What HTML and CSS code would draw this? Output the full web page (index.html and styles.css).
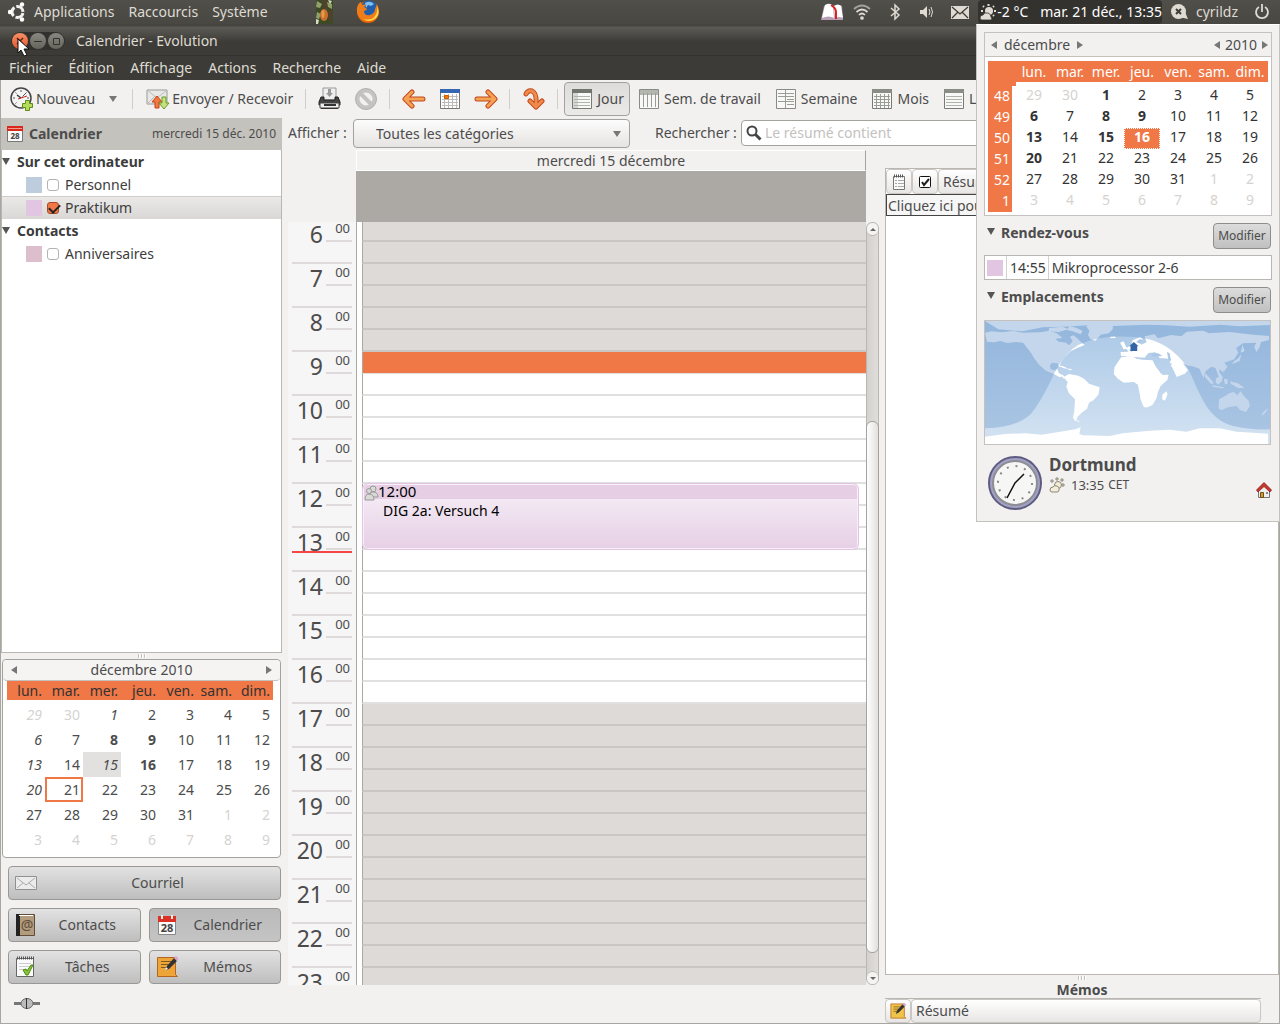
FILE: index.html
```html
<!DOCTYPE html>
<html lang="fr">
<head>
    <meta charset="UTF-8">
    <meta name="viewport" content="width=device-width, initial-scale=1.0">
    <title>Calendrier - Evolution</title>
    <link rel="stylesheet" href="styles.css">
</head>
<body>
    <!-- Tableau de bord GNOME -->
    <header class="panel">
        <nav class="panel-menu">
            <svg class="ubuntu" width="18" height="20" viewBox="0 0 18 20"><circle cx="9.500" cy="10" r="5.500" fill="none" stroke="#f2f1f0" stroke-width="3" stroke-dasharray="9.500 2" stroke-dashoffset="-1"/><g fill="#fff"><circle cx="2" cy="10" r="2.200"/><circle cx="14" cy="2.500" r="2.200"/><circle cx="14" cy="17.500" r="2.200"/></g></svg>
            <a href="#">Applications</a>
            <a href="#">Raccourcis</a>
            <a href="#">Système</a>
        </nav>
        <div class="launchers">
            <svg width="17" height="24" viewBox="0 0 17 24"><path fill="#3d4a26" d="M0 0h17v24H0z"/><path fill="#8fa06a" d="M1 1l5 3-2 4-4-1zM11 2l5 2v5l-4-2zM1 12l4 2-2 5-3-1z"/><path fill="#55402f" d="M7 0h3l1 10-3 2zM12 12l4-2v9l-3 3z"/><path fill="#d9dcc4" d="M12 0l4 1-2 3zM0 19l3 1-1 4H0z"/><ellipse cx="8" cy="15" rx="4" ry="6" fill="#c9702c"/><ellipse cx="7" cy="14" rx="1.500" ry="4" fill="#e79a4e"/></svg>
            <svg width="24" height="24" viewBox="0 0 24 24"><circle cx="12" cy="12" r="11" fill="#e66000"/><circle cx="13" cy="9" r="8.500" fill="#1f5fae"/><path fill="#7fc0ee" d="M9 3q5-3 9 1l-3 2-3-1-2 3z"/><path fill="#ee7d1a" d="M1 8q1-5 4-6l1 3q2-1 4 0L8 7q3 1 3 3-3 0-3 2 1 4 6 3 5-2 5-6l2-5q4 8-1 14-7 6-14 2Q0 15 1 8z"/><path fill="#ffd54a" d="M21 6q4 8-2 13-6 4-12 0 9 2 12-3 3-4 2-10z"/></svg>
        </div>
        <div class="tray">
            <svg width="24" height="20" viewBox="0 0 24 20"><path fill="#b89fb5" d="M1 18L4 4q8-3 10 0 5-2 8 0l1 14z"/><path fill="#fff" d="M2 16L5 3q5-3 8 1l1 12q-5-3-12 0zM14 4q4-3 7 0l2 12q-4-2-8 0z"/><path stroke="#d22" stroke-width="2" fill="none" d="M11 3q5 3 5 7v7"/></svg>
            <svg width="18" height="18" viewBox="0 0 18 18" fill="none" stroke="#dfdbd2" stroke-width="1.700"><path opacity=".6" d="M1 6q8-7 16 0"/><path d="M3.500 9q5.500-5 11 0M6 12q3-3 6 0"/><circle cx="9" cy="15" r="1" fill="#dfdbd2"/></svg>
            <svg width="12" height="18" viewBox="0 0 12 18" fill="none" stroke="#dfdbd2" stroke-width="1.500"><path d="M2 5l8 7-4 4V2l4 4-8 7"/></svg>
            <svg width="14" height="14" viewBox="0 0 14 14"><path fill="#dfdbd2" d="M1 5h3l4-4v12L4 9H1z"/><path fill="none" stroke="#dfdbd2" d="M10 4q2 3 0 6M12 2q3 5 0 10"/></svg>
            <svg width="18" height="13" viewBox="0 0 18 13"><path fill="#dfdbd2" d="M0 0h18v13H0z"/><path fill="none" stroke="#3c3b37" stroke-width="1.300" d="M1 1l8 7 8-7M1 12l6-6M17 12l-6-6"/></svg>
            <button class="clock-button">
                <svg width="18" height="18" viewBox="0 0 18 18" fill="#dfdbd2"><path stroke="#dfdbd2" stroke-width="2" d="M9.500 1v2M15 8h2M4 3l1 1M15 3l-1 1M2 8h2M15 13l-1-1"/><circle cx="10" cy="8" r="4"/><path stroke="#333" stroke-width=".8" d="M1 15q0-3 3-3 1-3 5-2 3 1 3 4 2 3-1 3H3q-2 0-2-2z"/></svg>
                <span>-2 °C</span><span>mar. 21 déc., 13:35</span>
            </button>
            <svg class="me" width="18" height="18" viewBox="0 0 18 18"><circle cx="8.500" cy="8.500" r="7.500" fill="#dfdbd2"/><path fill="#dfdbd2" d="M9 14l9 2-3-7z"/><path stroke="#3c3b37" stroke-width="2" d="M6 6l5 5M11 6l-5 5"/></svg>
            <span class="user">cyrildz</span>
            <svg width="16" height="16" viewBox="0 0 16 16" fill="none" stroke="#dfdbd2" stroke-width="1.800"><path d="M5 3a6 6 0 1 0 6 0M8 0v8"/></svg>
        </div>
    </header>

    <div class="window">
        <div class="titlebar">
            <div class="window-buttons">
                <button class="close" aria-label="Fermer"><svg width="16" height="16" viewBox="0 0 16 16" stroke="#5a2513" stroke-width="1.500"><path d="M5 5l6 6M11 5l-6 6"/></svg></button>
                <button aria-label="Réduire"><svg width="16" height="16" viewBox="0 0 16 16" stroke="#33322e"><path d="M4 8.500h8"/></svg></button>
                <button aria-label="Agrandir"><svg width="16" height="16" viewBox="0 0 16 16" fill="none" stroke="#33322e"><path d="M5.500 5.500h6v6h-6z"/></svg></button>
            </div>
            <span>Calendrier - Evolution</span>
        </div>
        <nav class="menubar">
            <a href="#">Fichier</a>
            <a href="#">Édition</a>
            <a href="#">Affichage</a>
            <a href="#">Actions</a>
            <a href="#">Recherche</a>
            <a href="#">Aide</a>
        </nav>

        <div class="toolbar">
            <button class="new">
                <svg width="24" height="24" viewBox="0 0 24 24"><circle cx="11" cy="11" r="10" fill="#f4f4f4" stroke="#444" stroke-width="1.500"/><path fill="none" stroke="#555" d="M11 3v2M3 11h2M17 11h2M5.500 5.500l1 1M5.500 16.500l1-1M16.500 5.500l-4 4"/><path stroke="#333" stroke-width="1.300" d="M11 11L7 8"/><path stroke="#c22" d="M8 12l9-3"/><path fill="#b4dc5a" stroke="#5c8c1c" d="M15.500 13.500h4v3h3v4h-3v3h-4v-3h-3v-4h3z"/></svg>
                Nouveau
            </button>
            <button class="drop" aria-label="Plus"><i class="tri-down"></i></button>
            <i class="sep"></i>
            <button class="send">
                <svg width="24" height="22" viewBox="0 0 24 22"><path fill="#e8e8e6" stroke="#999" d="M1 2h20v14H1z"/><path fill="none" stroke="#bbb" d="M1 16l8-8M1 2l10 8L21 2"/><path fill="#f0793f" stroke="#c8401a" d="M11 8l5 6h-3v6H9v-6H6z"/><path fill="#c5e27c" stroke="#6b9b2a" d="M18 21l-5-6h3V9h4v6h3z"/></svg>
                Envoyer / Recevoir
            </button>
            <i class="sep"></i>
            <button class="icon" aria-label="Imprimer"><svg width="24" height="24" viewBox="0 0 24 24"><path fill="#eee" stroke="#999" d="M5 1h13v12H5z"/><path fill="#999" d="M10 2h3v4h2l-3.500 4L8 6h2z"/><path fill="#444" stroke="#222" d="M3 10h3v3h11v-3h3l2 5v3H1v-3z"/><path fill="#eee" stroke="#444" d="M2 16h19v5H2z"/><path fill="#333" d="M6 17h12v2H6zM3 21h17v1H3z"/></svg></button>
            <button class="icon" aria-label="Arrêter" disabled><svg width="24" height="24" viewBox="0 0 24 24"><circle cx="12" cy="12" r="8.500" fill="none" stroke="#c6c3c1" stroke-width="4"/><path stroke="#c4c1bf" stroke-width="4" d="M6 6l12 12"/><circle cx="12" cy="12" r="10.500" fill="none" stroke="#b2afad"/></svg></button>
            <i class="sep"></i>
            <button class="icon" aria-label="Précédent"><svg width="24" height="20" viewBox="0 0 24 20"><path fill="none" stroke="#c4481c" stroke-width="5" stroke-linecap="round" stroke-linejoin="round" d="M21 10H4M10 3l-7 7 7 7"/><path fill="none" stroke="#f4a254" stroke-width="3" stroke-linecap="round" stroke-linejoin="round" d="M21 10H4M10 3l-7 7 7 7"/></svg></button>
            <button class="icon" aria-label="Aujourd'hui"><svg width="20" height="20" viewBox="0 0 20 20"><path fill="#fff" stroke="#777" d="M.5.500h19v19H.5z"/><path fill="#3467b0" d="M0 0h20v4H0z"/><path stroke="#bbb" d="M2 7.500h16M2 10.500h16M2 13.500h16M2 16.500h16M4.500 5v14M8.500 5v14M12.500 5v14M16.500 5v14"/><path fill="#f57900" stroke="#ce5c00" d="M4.500 6.500h4v3h-4z"/></svg></button>
            <button class="icon" aria-label="Suivant"><svg width="24" height="20" viewBox="0 0 24 20"><path fill="none" stroke="#c4481c" stroke-width="5" stroke-linecap="round" stroke-linejoin="round" d="M3 10h17M14 3l7 7-7 7"/><path fill="none" stroke="#f4a254" stroke-width="3" stroke-linecap="round" stroke-linejoin="round" d="M3 10h17M14 3l7 7-7 7"/></svg></button>
            <i class="sep"></i>
            <button class="icon" aria-label="Aller à"><svg width="22" height="22" viewBox="0 0 22 22" fill="none" stroke-linecap="round" stroke-linejoin="round"><path stroke="#c4481c" stroke-width="5" d="M3 6Q5 2 9 3q5 2 4 14M7 13l6 6 6-6"/><path stroke="#ee8a4a" stroke-width="3" d="M3 6Q5 2 9 3q5 2 4 14M7 13l6 6 6-6"/></svg></button>
            <i class="sep"></i>
            <button class="view active">
                <svg width="20" height="20" viewBox="0 0 20 20"><path fill="#f8f8f6" stroke="#777b74" d="M.5.500h19v19H.5z"/><path fill="#71756e" d="M0 0h20v4H0z"/><path fill="#d5d7d2" d="M1 4h5v15H1z"/><path stroke="#b0b3ac" d="M2 7.500h16M2 10.500h16M2 13.500h16M2 16.500h16"/></svg>
                Jour
            </button>
            <button class="view">
                <svg width="20" height="20" viewBox="0 0 20 20"><path fill="#f8f8f6" stroke="#888c85" d="M.5.500h19v19H.5z"/><path fill="#b4b7b0" d="M1 1h18v5H1z"/><path stroke="#9a9d96" d="M4.500 4v14M8.500 4v14M12.500 4v14M16.500 4v14"/></svg>
                Sem. de travail
            </button>
            <button class="view">
                <svg width="20" height="20" viewBox="0 0 20 20"><path fill="#f8f8f6" stroke="#888c85" d="M.5.500h19v19H.5z"/><path stroke="#9a9d96" d="M9.500 1v18M2 4.500h16M2 7.500h16M2 12.500h16M11 10.500h7M11 15.500h7"/></svg>
                Semaine
            </button>
            <button class="view">
                <svg width="20" height="20" viewBox="0 0 20 20"><path fill="#f8f8f6" stroke="#777b74" d="M.5.500h19v19H.5z"/><path fill="#8a8d86" d="M0 0h20v4H0z"/><path stroke="#9a9d96" d="M2 7.500h16M2 10.500h16M2 13.500h16M2 16.500h16M4.500 5v14M8.500 5v14M12.500 5v14M16.500 5v14"/></svg>
                Mois
            </button>
            <button class="view">
                <svg width="20" height="20" viewBox="0 0 20 20"><path fill="#f8f8f6" stroke="#777b74" d="M.5.500h19v19H.5z"/><path fill="#8a8d86" d="M0 0h20v4H0z"/><path stroke="#b0b3ac" d="M2 7.500h16M2 10.500h16M2 13.500h16M2 16.500h16"/></svg>
                Liste
            </button>
        </div>

        <div class="workspace">
            <aside class="sidebar">
                <div class="sidebar-head">
                    <svg width="16" height="16" viewBox="0 0 16 16"><path fill="#fafafa" stroke="#777" d="M.5.500h15v15H.5z"/><path fill="#d8281c" d="M0 0h16v5H0z"/><path fill="#f59a90" d="M1 2h14v1H1z"/><text x="8" y="13" font-size="8" font-weight="bold" text-anchor="middle" fill="#444">28</text></svg>
                    <b>Calendrier</b>
                    <span>mercredi 15 déc. 2010</span>
                </div>
                <div class="tree">
                    <div class="group"><i class="tri-dark"></i>Sur cet ordinateur</div>
                    <label class="source"><i class="swatch blue"></i><input type="checkbox">Personnel</label>
                    <label class="source selected"><i class="swatch pink"></i><input type="checkbox" checked>Praktikum</label>
                    <div class="group"><i class="tri-dark"></i>Contacts</div>
                    <label class="source"><i class="swatch rose"></i><input type="checkbox">Anniversaires</label>
                </div>
                <div class="grip"></div>
                <div class="mini-cal">
                    <div class="mini-head">
                        <button aria-label="Mois précédent"><i class="tri-left"></i></button>
                        <span>décembre 2010</span>
                        <button aria-label="Mois suivant"><i class="tri-right"></i></button>
                    </div>
                    <table>
                        <thead>
                            <tr><th>lun.</th><th>mar.</th><th>mer.</th><th>jeu.</th><th>ven.</th><th>sam.</th><th>dim.</th></tr>
                        </thead>
                        <tbody>
                            <tr><td class="out it">29</td><td class="out">30</td><td class="it">1</td><td>2</td><td>3</td><td>4</td><td>5</td></tr>
                            <tr><td class="it">6</td><td>7</td><td class="busy">8</td><td class="busy">9</td><td>10</td><td>11</td><td>12</td></tr>
                            <tr><td class="it">13</td><td>14</td><td class="it picked">15</td><td class="busy">16</td><td>17</td><td>18</td><td>19</td></tr>
                            <tr><td class="it">20</td><td class="today">21</td><td>22</td><td>23</td><td>24</td><td>25</td><td>26</td></tr>
                            <tr><td>27</td><td>28</td><td>29</td><td>30</td><td>31</td><td class="out">1</td><td class="out">2</td></tr>
                            <tr><td class="out">3</td><td class="out">4</td><td class="out">5</td><td class="out">6</td><td class="out">7</td><td class="out">8</td><td class="out">9</td></tr>
                        </tbody>
                    </table>
                </div>
                <div class="switcher">
                    <button class="wide">
                        <svg width="22" height="22" viewBox="0 0 22 22"><path fill="#ececec" stroke="#909090" d="M.5 4.500h21v13H.5z"/><path fill="none" stroke="#aaa" d="M2 6l9 7 9-7M2 16l6-5M20 16l-6-5"/></svg>
                        <span>Courriel</span>
                    </button>
                    <button>
                        <svg width="22" height="24" viewBox="0 0 22 24"><path fill="#b39b7d" stroke="#5e4d38" d="M2.500 1.500h17v21h-17z"/><path fill="#222" d="M1 1h4v22H1z"/><path fill="#fff" d="M4 2h14v1H4z"/><text x="12" y="17" font-size="14" text-anchor="middle" fill="#5e4d38">@</text></svg>
                        <span>Contacts</span>
                    </button>
                    <button class="active">
                        <svg width="22" height="22" viewBox="0 0 22 22"><path fill="#fafafa" stroke="#888" d="M2.500 2.500h17v18h-17z"/><path fill="#dc3024" d="M2 2h18v6H2z"/><path fill="#eee" d="M5 1h2v4H5zM15 1h2v4h-2z"/><text x="11" y="18" font-size="11" font-weight="bold" text-anchor="middle" fill="#444">28</text></svg>
                        <span>Calendrier</span>
                    </button>
                    <button>
                        <svg width="22" height="24" viewBox="0 0 22 24"><path fill="#fbfbfb" stroke="#666" d="M1.500 3.500h17v18h-17z"/><path stroke="#555" stroke-width="3" stroke-dasharray="1 1" d="M2 3h17"/><path fill="none" stroke="#ccc" d="M4 8.500h12M4 11.500h12M4 14.500h6"/><path fill="#8ac43a" stroke="#4e8a10" d="M8 15l3-1 1 2 4-6h2l-5 10h-2z"/></svg>
                        <span>Tâches</span>
                    </button>
                    <button>
                        <svg width="22" height="24" viewBox="0 0 22 24"><path fill="#eda53a" stroke="#b5651d" d="M1.500 2.500h18v17l2 2h-20z"/><path stroke="#7d5a1e" d="M5 6.500h10M5 9.500h8M5 12.500h6"/><path fill="#333" d="M9 15l2-4 7-8 3 3-8 8z"/><path fill="#fff" d="M9 15l1-3 2 2z"/><path fill="#d9a5d0" d="M18 3l2-2 3 3-2 2z"/></svg>
                        <span>Mémos</span>
                    </button>
                </div>
                <div class="status">
                    <svg width="28" height="14" viewBox="0 0 28 14"><path stroke="#777" stroke-width="3" d="M1 6.500h7M20 6.500h7"/><ellipse cx="14" cy="6.500" rx="6" ry="5" fill="#bbb" stroke="#666"/><path stroke="#333" d="M13.500 1v11"/></svg>
                </div>
            </aside>

            <i class="vgrip"></i>

            <main class="content">
                <div class="filters">
                    <label for="category">Afficher :</label>
                    <div class="combo">
                        <select id="category"><option>Toutes les catégories</option></select>
                        <i class="tri-down"></i>
                    </div>
                    <label class="find" for="search">Rechercher :</label>
                    <div class="search">
                        <svg width="16" height="16" viewBox="0 0 16 16" fill="none" stroke="#444"><circle cx="6" cy="6" r="4.500" stroke-width="2"/><path stroke-width="3" d="M9.500 9.500l5 5"/></svg>
                        <input type="text" id="search" placeholder="Le résumé contient">
                    </div>
                </div>

                <div class="panes">
                    <section class="day-view">
                        <div class="day-head">mercredi 15 décembre</div>
                        <div class="all-day"></div>
                        <div class="day-scroll">
                            <div class="hours" id="hours"></div>
                            <div class="slots" id="slots">
                                <div class="event">
                                    <div class="event-time">12:00</div>
                                    <div class="event-name">DIG 2a: Versuch 4</div>
                                    <svg width="16" height="16" viewBox="0 0 16 16" fill="#d9d9d6" stroke="#999"><circle cx="9" cy="4" r="3"/><path d="M5 12q0-5 4-5 5 0 5 5z"/><circle cx="5" cy="6" r="2.500"/><path d="M1 15q0-6 4-6 5 0 5 6z"/></svg>
                                </div>
                            </div>
                        </div>
                        <div class="scrollbar">
                            <i class="step"><b class="tri-up"></b></i>
                            <i class="thumb"></i>
                            <i class="step end"><b class="tri-small"></b></i>
                        </div>
                    </section>

                    <section class="tasks">
                        <div class="task-list">
                            <div class="cols">
                                <button aria-label="Type"><svg width="14" height="16" viewBox="0 0 14 16"><path fill="#fafafa" stroke="#777" d="M1.500 2.500h11v13h-11z"/><path stroke="#555" stroke-width="3" stroke-dasharray="1 1" d="M2 2h10"/><path stroke="#aaa" stroke-dasharray="2 1 6" d="M3 6.500h9M3 9.500h9M3 12.500h9"/></svg></button>
                                <button aria-label="Terminé"><svg width="14" height="14" viewBox="0 0 14 14"><rect x="1.500" y="1.500" width="11" height="11" rx="1" fill="#fff" stroke="#111"/><path fill="none" stroke="#222" stroke-width="2" d="M4 7l2 3 5-6"/></svg></button>
                                <button class="grow">Résumé</button>
                            </div>
                            <input type="text" class="quick-add" aria-label="Nouvelle tâche" value="Cliquez ici pour ajouter une tâche">
                        </div>
                        <div class="grip"></div>
                        <h2>Mémos</h2>
                        <div class="memo-cols cols">
                            <button aria-label="Type"><svg width="18" height="18" viewBox="0 0 22 24"><path fill="#f0c34a" stroke="#b5651d" d="M1.500 2.500h18v17l2 2h-20z"/><path stroke="#7d5a1e" d="M5 6.500h10M5 9.500h8M5 12.500h6"/><path fill="#333" d="M8 16l2-5 7-8 3 3-8 8z"/><path fill="#d9a5d0" d="M17 3l2-2 3 3-2 2z"/></svg></button>
                            <button class="grow">Résumé</button>
                        </div>
                    </section>
                </div>
            </main>
        </div>
    </div>

    <!-- Pointeur de souris -->
    <svg class="cursor" width="14" height="20" viewBox="0 0 14 20"><path fill="#fff" stroke="#111" d="M1 1v14l3-3 3 6 3-1-3-6h5z"/></svg>

    <!-- Calendrier de l'horloge -->
    <div class="popup">
        <div class="cal">
            <div class="cal-head">
                <i class="tri-left"></i><span>décembre</span><i class="tri-right"></i>
                <i class="tri-left year"></i><span>2010</span><i class="tri-right"></i>
            </div>
            <table>
                <thead>
                    <tr><th class="week"></th><th>lun.</th><th>mar.</th><th>mer.</th><th>jeu.</th><th>ven.</th><th>sam.</th><th>dim.</th></tr>
                </thead>
                <tbody>
                    <tr><td class="week">48</td><td class="out">29</td><td class="out">30</td><td class="busy">1</td><td>2</td><td>3</td><td>4</td><td>5</td></tr>
                    <tr><td class="week">49</td><td class="busy">6</td><td>7</td><td class="busy">8</td><td class="busy">9</td><td>10</td><td>11</td><td>12</td></tr>
                    <tr><td class="week">50</td><td class="busy">13</td><td>14</td><td class="busy">15</td><td class="busy picked">16</td><td>17</td><td>18</td><td>19</td></tr>
                    <tr><td class="week">51</td><td class="busy">20</td><td>21</td><td>22</td><td>23</td><td>24</td><td>25</td><td>26</td></tr>
                    <tr><td class="week">52</td><td>27</td><td>28</td><td>29</td><td>30</td><td>31</td><td class="out">1</td><td class="out">2</td></tr>
                    <tr><td class="week">1</td><td class="out">3</td><td class="out">4</td><td class="out">5</td><td class="out">6</td><td class="out">7</td><td class="out">8</td><td class="out">9</td></tr>
                </tbody>
            </table>
        </div>

        <div class="section-head"><i class="tri-dark"></i><b>Rendez-vous</b><button>Modifier</button></div>
        <div class="appointment"><i class="swatch pink"></i><span class="time">14:55</span><span>Mikroprocessor 2-6</span></div>
        <div class="section-head"><i class="tri-dark"></i><b>Emplacements</b><button>Modifier</button></div>

        <svg class="map" viewBox="48 63 852 369" preserveAspectRatio="none">
            <defs>
                <linearGradient id="sea" x1="0" y1="0" x2="0" y2="1"><stop offset="0" stop-color="#a9c7e6"/><stop offset="1" stop-color="#d4e3f2"/></linearGradient>
            </defs>
            <path fill="url(#sea)" d="M48 63h852v369H48z"/>
            <g fill="#fff">
                <path d="M48 63h852v12l-90 4-60-5-90 6-70-4-60-2-100 4-60-3-90 5-60 2-60 12-72-6z"/>
                <path d="M48 98l20-4 30 3 34-4 30 5 50-1 30-5 20 8 18 14-22 2 10 9 22 3 10 8 10-12-8-14 10-4 12 9 10 10 12 10-22 9-20 10-18 18-10 14-4 10 0 6-8-12-16-2-6 8 2 12 12 3 8-5 4 12 12 10-8 4-18-10-24-10-20-18-16-20-6-12-12-16-14-18-22-2-26 3-20-6-20 4-20-2z"/>
                <path d="M300 78l20 5 20 10-6 10-20-8-20-5zM350 78l30-8 50 0 0 18-12 12-24 4-16 18-14-4-8-12 4-14zM240 84l40-4 18 8-30 8-30-2zM420 110l16-1 4 4-14 2zM262 196l20 3 16 8-14-2zM290 205l20 3-8 3z"/>
                <path d="M270 222l10 2 8 8-4 4zM283 232l16-10 28 5 18 10 14 14 32 11-4 22-14 16-14 8-6 18-16 12-12 12-4 12 8 0 2 4-14-4-6-8 4-22 2-34-18-18-8-20 4-14z"/>
                <path d="M455 172l32-4 14 8 18 3 30 2 12 22 18 22 18-1-4 16-20 18-8 18-4 18-12 20-14 8-12 0-10-24-4-24-4-20-12-8-30 2-18-12-12-14 2-20z"/>
                <path d="M578 284l12-10 4 8-8 20-8-4zM452 128l10-4 8 16 4 6-12 2zM786 192l8-10 10-6 10-14-4 20-16 8zM812 158l6-24 6 20z"/>
                <path d="M455 168l-2-12 24-1-8-10 16-10 4-14 24-10 8 10-8 14 18-8-6-18 30-6 10 12 40-10 30 4 16-14 50-3 16 8 62-4 70 8 48 4v12l-24 6-4 16-10 14-6-16 6-12-40 2-20 14 6 14-12 20-30 10 10 12-10 14-10-6-6 6 12 18-4 12-10-18-8-22-12-4-18 14-6 20-12-28-20-7-14-2-16-8 16 22-10 10-24 10-12-26-10-16 6-12-24-2-10 0-14-18-20 2-12 14z"/>
                <path d="M704 218l14 14 14 18-8 2-18-20zM738 236l14-10 4 18-10 10-8-6zM762 238l10-2 2 14-8 4zM748 198l8-4 6 24-8-6zM728 256l36 6-6 3-30-5zM780 244l24 6 20 14-20 0-20-12zM748 298l14-8 16-10 14-4 10 10 10-12 8 12 16 16 4 16-12 18-18-6-10-12-26 4-18 8-10-4z"/>
                <path d="M874 344l10-12 10-8-6 12-10 10zM48 410l60-8 60-2 50 4 50-8 50-8 16-6-4 20 10 4 80 2 40-8 80-8 60-3 50 6 40-10 60 0 50 10 60 4 34 2v33H48z"/>
            </g>
            <path fill="#a9c7e6" d="M546 166q8-12 24-4l8 6-28 2zM592 156l8 4 4 22-8-4zM478 150l8-2 2 8zM500 126l10-8 12 2-8 12z"/>
            <path fill="none" stroke="#bcd2ea" stroke-width="4" d="M554 188l22 32M592 184l14 10"/>
            <path fill="#76a1d0" fill-opacity=".43" d="M48 63h852v325q-60 2-110-10-50-12-84-66-20-34-40-84-20-46-62-78-50-40-130-40-84-4-146 24-40 22-72 84-30 66-60 110-36 54-148 57z"/>
            <path fill="#3465a4" d="M493 126l14 13h-4v14h-20v-14h-4z"/>
        </svg>

        <div class="location">
            <svg width="56" height="56" viewBox="0 0 56 56"><circle cx="28" cy="28" r="26" fill="#a3a2c4" stroke="#5e5b80" stroke-width="2"/><circle cx="28" cy="28" r="22" fill="#f6f6f4" stroke="#8d8d95" stroke-width="2"/><circle cx="28" cy="28" r="17" fill="none" stroke="#888" stroke-width="2" stroke-dasharray="2 6.900"/><path fill="none" stroke="#111" stroke-width="1.500" d="M20 43l8-15 9-9"/></svg>
            <div class="place">
                <b>Dortmund</b>
                <span><svg width="16" height="16" viewBox="0 0 16 16" fill="#f3ecd8" stroke="#8b8776"><path d="M7 1h2v2H7zM2 3h2v2H2zM12 2h2v2h-2zM13 7h2v2h-2z"/><circle cx="9" cy="8" r="3.500"/><path d="M1 13q0-3 3-3 1-2 4-1 3 1 2 4 0 2-2 2H3q-2 0-2-2z"/></svg>13:35 <small>CET</small></span>
            </div>
            <svg class="home" width="16" height="16" viewBox="0 0 16 16"><path fill="#eee" stroke="#777" d="M2.500 8v7.500h11V8L8 3z"/><path fill="#c4372f" stroke="#8f1f1a" stroke-width=".8" d="M8 .5L.5 8l1.500 2L8 4.500 14 10l1.500-2z"/><path fill="#d59a2c" stroke="#70501a" d="M4.500 10.500h3v5h-3z"/><path fill="#888" d="M10 10h2v2h-2z"/></svg>
        </div>
    </div>

    <script>
        // Construit la colonne des heures et les demi-heures de la journée
        const hours = document.getElementById('hours');
        const slots = document.getElementById('slots');

        for (let h = 6; h < 24; h++) {
            const row = document.createElement('div');
            row.className = 'hour';
            row.innerHTML = '<span>' + h + '</span><small>00</small>';
            if (h === 13) {
                row.innerHTML += '<i class="now"></i>';
            }
            hours.appendChild(row);

            for (let half = 0; half < 2; half++) {
                const slot = document.createElement('div');
                slot.className = 'slot';
                if (h >= 9 && h < 17) {
                    slot.classList.add('work');
                }
                if (h === 9 && half === 0) {
                    slot.classList.add('current');
                }
                slots.appendChild(slot);
            }
        }
    </script>
</body>
</html>
```
FILE: styles.css
```css
* {
    box-sizing: border-box;
}
body {
    margin: 0;
    height: 100vh;
    display: flex;
    flex-direction: column;
    overflow: hidden;
    background: #f2f1f0;
    color: #4c4c4c;
    font-family: "Noto Sans", "Open Sans", sans-serif;
    font-size: 14px;
    line-height: 20px;
}
button,
input,
select {
    font: inherit;
    color: inherit;
    margin: 0;
    padding: 0;
}
button {
    border: none;
    background: none;
    white-space: nowrap;
}
a {
    color: inherit;
    text-decoration: none;
}
svg {
    display: block;
    flex: none;
}
i {
    flex: none;
    font-style: normal;
}
table {
    border-spacing: 0;
    table-layout: fixed;
}
th,
td {
    padding: 0;
    font-weight: normal;
}

/* flèches */
.tri-down,
.tri-dark,
.tri-up,
.tri-small,
.tri-left,
.tri-right {
    display: block;
    border: 4px solid transparent;
}
.tri-down {
    border-top: 6px solid #777;
    border-bottom: none;
}
.tri-dark {
    border-top: 7px solid #555;
    border-bottom: none;
}
.tri-up {
    border-width: 3px;
    border-bottom: 3px solid #666;
    border-top: none;
}
.tri-small {
    border-width: 3px;
    border-top: 3px solid #666;
    border-bottom: none;
}
.tri-left {
    border-right: 6px solid #777;
    border-left: none;
}
.tri-right {
    border-left: 6px solid #777;
    border-right: none;
}

/* tableau de bord */
.panel {
    height: 24px;
    flex: none;
    display: flex;
    align-items: center;
    justify-content: space-between;
    padding: 0 10px 0 8px;
    background: linear-gradient(#504f4a, #484742);
    color: #dfdbd2;
}
.panel-menu {
    display: flex;
    align-items: center;
    gap: 14px;
}
.ubuntu {
    margin-right: -6px;
}
.launchers {
    display: flex;
    gap: 23px;
    flex: 1;
    padding-left: 48px;
}
.tray {
    display: flex;
    align-items: center;
    gap: 18px;
}
.tray > svg:first-child {
    margin-right: -9px;
}
.clock-button {
    height: 24px;
    display: flex;
    align-items: center;
    gap: 12px;
    margin: 0 -10px 0 -9px;
    border-radius: 4px;
    background: #33322e;
    color: #fff;
}
.clock-button svg {
    margin: 0 -12px 0 1px;
}
.user {
    margin: 0 -2px 0 -10px;
}

/* fenêtre */
.window {
    flex: 1;
    min-height: 0;
    display: flex;
    flex-direction: column;
    border: 1px solid #a8a6a1;
    border-top: none;
}
.titlebar {
    height: 31px;
    flex: none;
    display: flex;
    align-items: center;
    gap: 11px;
    margin: 0 -1px;
    padding: 2px 11px 0;
    background: linear-gradient(#45443f 2px, #5c5b55 3px, #3c3b37 18px);
    color: #dfdbd2;
}
.window-buttons {
    display: flex;
    gap: 2px;
    padding: 1px;
    border-radius: 9px;
    background: #32312d;
}
.window-buttons button {
    width: 16px;
    height: 16px;
    border-radius: 8px;
    background: linear-gradient(#8a8880, #65645d);
}
.window-buttons .close {
    background: linear-gradient(#f79067, #e2582e);
}
.menubar {
    height: 25px;
    flex: none;
    display: flex;
    align-items: center;
    gap: 16px;
    margin: 0 -1px;
    padding-left: 9px;
    border-top: 1px solid #33322e;
    background: #3c3b37;
    color: #dfdbd2;
}
.toolbar {
    height: 38px;
    flex: none;
    display: flex;
    align-items: center;
    padding-left: 9px;
    overflow: hidden;
}
.toolbar button {
    display: flex;
    align-items: center;
    gap: 2px;
}
.toolbar .drop {
    padding: 0 14px;
}
.toolbar .icon {
    width: 36px;
    justify-content: center;
}
.toolbar .view {
    height: 34px;
    gap: 5px;
    padding: 0 5px 0 8px;
    border: 1px solid transparent;
    border-radius: 4px;
}
.toolbar .view.active {
    padding-left: 7px;
    border-color: #a5a29d;
    background: linear-gradient(#dedcda, #eceae8);
}
.sep {
    width: 1px;
    height: 20px;
    margin: 0 6px 0 5px;
    background: #d0cdca;
}
.drop + .sep {
    margin-right: 13px;
    margin-left: 1px;
}
.send + .sep {
    margin-left: 12px;
}

/* colonne de gauche */
.workspace {
    flex: 1;
    min-height: 0;
    display: flex;
}
.sidebar {
    width: 281px;
    flex: none;
    display: flex;
    flex-direction: column;
}
.sidebar-head {
    height: 32px;
    display: flex;
    align-items: center;
    gap: 6px;
    padding: 0 6px;
    background: #c4c2bc;
}
.sidebar-head span {
    margin-left: auto;
    font-size: 12px;
}
.tree {
    flex: 1;
    border: 1px solid #bab7b3;
    border-width: 0 1px 1px;
    background: #fff;
    color: #3c3c3c;
}
.group {
    height: 23px;
    display: flex;
    align-items: center;
    gap: 7px;
    font-weight: bold;
}
.source {
    height: 23px;
    display: flex;
    align-items: center;
    gap: 5px;
    padding-left: 24px;
}
.source.selected {
    border-top: 1px solid #cfcdca;
    background: linear-gradient(#eae9e8, #dad8d6);
}
.source input {
    appearance: none;
    width: 12px;
    height: 12px;
    margin-right: 1px;
    border: 1px solid #b5b3b0;
    border-radius: 3px;
    background: #fff;
}
.source input:checked {
    border-color: #a8492a;
    background: #f07746;
}
.source input:checked::after {
    content: "";
    display: block;
    width: 9px;
    height: 5px;
    margin: 1px;
    border: solid #222;
    border-width: 0 0 2px 2px;
    transform: rotate(-45deg);
}
.swatch {
    width: 16px;
    height: 16px;
}
.blue {
    background: #becddd;
}
.pink {
    background: #e2c5e1;
}
.rose {
    background: #ddbecd;
}
.grip {
    width: 8px;
    height: 4px;
    margin: 1px auto;
    background: repeating-linear-gradient(90deg, #c4c1be 0 1px, #fff 1px 2px, transparent 2px 3px);
}
.mini-cal {
    height: 199px;
    margin: 0 1px 8px;
    border: 1px solid #a5a29d;
    border-radius: 4px;
    background: #fff;
}
.mini-head {
    height: 21px;
    display: flex;
    align-items: center;
    justify-content: space-between;
    padding: 0 8px;
    border-bottom: 1px solid #c4c1be;
    border-radius: 4px;
    background: #f5f4f3;
}
.mini-cal table {
    width: 266px;
    margin-left: 4px;
    text-align: right;
}
.mini-cal th {
    height: 21px;
    line-height: 19px;
    padding-right: 3px;
    border-bottom: 2px solid #fff;
    background: #f07746;
    background-clip: padding-box;
    color: #333;
}
.mini-cal td {
    height: 25px;
    padding-right: 3px;
}
td.out {
    color: #d5d3d1;
}
.it {
    font-style: italic;
}
.busy {
    font-weight: bold;
}
.mini-cal .picked {
    background: #e2e1df;
}
.mini-cal .today {
    box-shadow: inset 0 0 0 2px #f07746;
}
.switcher {
    display: grid;
    grid-template-columns: 1fr 1fr;
    gap: 8px;
    padding: 0 1px 0 7px;
}
.switcher button {
    height: 34px;
    display: flex;
    align-items: center;
    padding: 0 6px;
    border: 1px solid #9a9895;
    border-radius: 4px;
    background: linear-gradient(#e2e2e2, #bebebe);
}
.switcher span {
    flex: 1;
    padding-left: 4px;
}
.switcher .wide {
    grid-column: 1 / 3;
}
.switcher .active {
    background: linear-gradient(#bababa, #c4c4c4);
}
.status {
    height: 39px;
    flex: none;
    padding: 13px 12px;
}
.vgrip {
    width: 6px;
}

/* barre de filtre */
.content {
    flex: 1;
    min-width: 0;
    display: flex;
    flex-direction: column;
}
.filters {
    height: 32px;
    flex: none;
    display: flex;
    align-items: flex-start;
    padding-top: 1px;
    line-height: 28px;
    white-space: nowrap;
}
.filters label {
    width: 65px;
    flex: none;
}
.filters .find {
    width: 86px;
    margin-left: 25px;
}
.combo {
    width: 277px;
    flex: none;
    display: flex;
    align-items: center;
    padding-right: 8px;
    border: 1px solid #a5a29d;
    border-radius: 4px;
    background: linear-gradient(#fcfcfc, #e6e4e2);
}
.combo select {
    appearance: none;
    flex: 1;
    height: 27px;
    padding-left: 22px;
    border: none;
    background: none;
}
.search {
    flex: 1;
    height: 26px;
    display: flex;
    align-items: center;
    gap: 3px;
    margin-top: 1px;
    padding-left: 4px;
    border: 1px solid #a5a29d;
    border-radius: 4px;
    background: #fff;
}
.search input {
    flex: 1;
    min-width: 0;
    border: none;
    background: none;
}
.search input::placeholder {
    color: #c4c1be;
}
.panes {
    flex: 1;
    min-height: 0;
    display: flex;
    gap: 6px;
}

/* vue de la journée */
.day-view {
    flex: 1;
    min-width: 0;
    display: grid;
    grid-template-columns: 68px 1fr 13px;
    grid-template-rows: 21px 51px 1fr;
    margin-bottom: 38px;
}
.day-head {
    grid-column: 2;
    border: 1px solid #fff;
    border-right-color: #a5a29d;
    text-align: center;
}
.all-day {
    grid-column: 2;
    background: #aca9a4;
}
.day-scroll {
    grid-row: 3;
    grid-column: 1 / 3;
    display: flex;
    min-height: 0;
    overflow: hidden;
}
.hours {
    width: 68px;
    margin-top: -2px;
    padding: 0 4px;
    background: #f6f6f6;
}
.hour {
    position: relative;
    height: 44px;
    display: flex;
    justify-content: flex-end;
    border-bottom: 2px solid #dfdada;
}
.hour span {
    padding-right: 3px;
    font-size: 23px;
    line-height: 28px;
}
.hour small {
    width: 26px;
    height: 22px;
    padding-right: 2px;
    border-bottom: 2px solid #dfdada;
    font-size: 13px;
    line-height: 17px;
    text-align: right;
}
.now {
    position: absolute;
    top: 54%;
    left: 0;
    right: 0;
    height: 2px;
    background: #f54545;
}
.slots {
    position: relative;
    flex: 1;
    height: 792px;
    margin-top: -2px;
    border-left: 1px solid #aca9a4;
    padding-left: 5px;
    background: #fff;
}
.slot {
    height: 22px;
    border-left: 1px solid #aca9a4;
    border-bottom: 2px solid #c9c6c3;
    background: #dddad7;
}
.slot.work {
    border-bottom-color: #e0e0e0;
    background: #fff;
}
.slot.current {
    border-bottom-width: 1px;
    background: #f07746;
}
.event {
    position: absolute;
    top: 263px;
    left: 5px;
    right: 7px;
    height: 67px;
    border: 1px solid #e2c5e1;
    border-radius: 6px;
    box-shadow: inset 0 0 0 1px #f8effa;
    background: linear-gradient(#e6cfe5 15px, #f3e8f3 15px, #e6cfe5);
    color: #000;
}
.event-time {
    padding-left: 15px;
    font-size: 15px;
    line-height: 14px;
}
.event-name {
    padding: 3px 0 0 20px;
}
.event svg {
    position: absolute;
    top: 1px;
    left: 1px;
}
.scrollbar {
    grid-row: 3;
    grid-column: 3;
    display: flex;
    flex-direction: column;
    border: 1px solid #bab7b3;
    border-radius: 6px;
    background: linear-gradient(90deg, #d4d1ce, #e0dedc);
}
.step {
    height: 13px;
    display: grid;
    place-items: center;
    border-bottom: 1px solid #bab7b3;
    border-radius: 6px;
    background: #f5f4f3;
}
.step.end {
    border-top: 1px solid #bab7b3;
    border-bottom: none;
}
.thumb {
    flex: 1;
    margin: 185px -1px 18px;
    border: 1px solid #a5a29d;
    border-radius: 6px;
    background: linear-gradient(90deg, #fff, #e2e0de);
}

/* tâches et mémos */
.tasks {
    width: 394px;
    flex: none;
    display: flex;
    flex-direction: column;
    padding-top: 18px;
}
.task-list {
    flex: 1;
    border: 1px solid #bab7b3;
    background: #fff;
}
.cols {
    height: 25px;
    display: flex;
}
.cols button {
    width: 26px;
    display: grid;
    place-items: center;
    border: 1px solid #c9c6c3;
    border-radius: 4px;
    background: linear-gradient(#fff, #e8e6e4);
}
.cols .grow {
    flex: 1;
    padding-left: 4px;
    justify-items: start;
}
.quick-add {
    display: block;
    width: 100%;
    height: 22px;
    padding: 0 1px;
    border: 1px solid #444;
    background: #f6f6f6;
}
.tasks h2 {
    margin: 0;
    font-size: 14px;
    line-height: 17px;
    text-align: center;
}
.memo-cols {
    margin-right: 18px;
    border-top: 1px solid #bab7b3;
}

.cursor {
    position: absolute;
    top: 38px;
    left: 17px;
}

/* calendrier déroulant */
.popup {
    position: absolute;
    top: 24px;
    right: 0;
    width: 304px;
    padding: 7px 7px 10px;
    border: 1px solid #c4c2bc;
    border-top-color: #fff;
    background: #f2f1f0;
}
.cal {
    height: 184px;
    border: 1px solid #c4c1be;
    background: #fff;
}
.cal-head {
    height: 24px;
    display: flex;
    align-items: center;
    gap: 7px;
    margin-bottom: 4px;
    padding: 0 3px 0 6px;
    border-bottom: 1px solid #c4c1be;
    background: #f2f1f0;
}
.cal-head .year {
    margin-left: auto;
}
.cal-head .year ~ * {
    margin-left: -2px;
}
.cal table {
    width: 280px;
    margin-left: 3px;
    background: linear-gradient(#f07746, #f07746) no-repeat left / 24px 100%;
    text-align: center;
    color: #333;
}
.cal th {
    height: 25px;
    border-bottom: 4px solid #fff;
    background: #f07746;
    color: #fff;
}
.cal td {
    height: 21px;
    line-height: 18px;
    vertical-align: top;
}
.cal .week {
    width: 28px;
    padding: 1px 6px 0 0;
    border-bottom: none;
    text-align: right;
    color: #fff;
}
.cal .picked {
    outline: 1px dotted #fff;
    outline-offset: -1px;
    background: #f07746;
    color: #fff;
}
.section-head {
    height: 39px;
    display: flex;
    align-items: center;
    gap: 6px;
    padding: 0 1px 0 3px;
}
.section-head b {
    flex: 1;
    margin-top: -5px;
}
.section-head .tri-dark {
    margin-top: -8px;
}
.section-head button {
    width: 58px;
    height: 26px;
    border: 1px solid #8f8d8a;
    border-radius: 4px;
    background: linear-gradient(#dcdcdc, #c0c0c0);
    font-size: 12px;
}
.appointment {
    height: 25px;
    display: flex;
    align-items: center;
    gap: 3px;
    padding-left: 2px;
    border: 1px solid #bab7b3;
    background: #fff;
    color: #3c3c3c;
}
.appointment .time {
    padding: 0 2px 0 3px;
    border: 1px solid #d4d1ce;
    border-width: 0 1px;
    line-height: 23px;
}
.map {
    width: 287px;
    height: 125px;
    margin: 1px 0 10px;
    border: 1px solid #c4c1be;
}
.location {
    display: flex;
    gap: 6px;
    padding-left: 3px;
}
.place {
    flex: 1;
}
.place b {
    display: block;
    font-size: 17px;
    line-height: 20px;
}
.place span {
    display: flex;
    align-items: center;
    gap: 6px;
    font-size: 13px;
}
.place small {
    margin-left: -2px;
    font-size: 12px;
}
.home {
    margin-top: 27px;
}
```
